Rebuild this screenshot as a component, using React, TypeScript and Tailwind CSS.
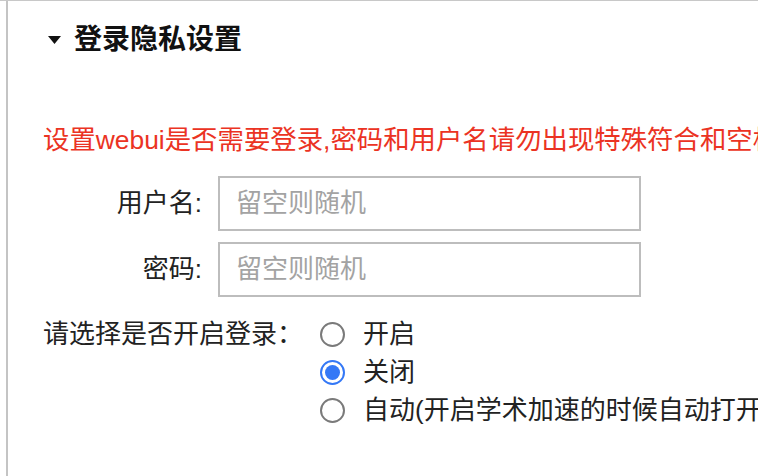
import React, { useState } from 'react';

const font = { fontFamily: '"Liberation Sans", "Noto Sans CJK SC", sans-serif' };

const options = [
  { value: 'on', label: '开启' },
  { value: 'off', label: '关闭' },
  { value: 'auto', label: '自动(开启学术加速的时候自动打开登录)' },
];

function Radio({ checked }: { checked: boolean }) {
  return checked ? (
    <span className="w-[25px] h-[25px] rounded-full border-2 border-[#3478f6] flex items-center justify-center shrink-0">
      <span className="w-[15px] h-[15px] rounded-full bg-[#3478f6]" />
    </span>
  ) : (
    <span className="w-[25px] h-[25px] rounded-full border-2 border-[#7a7a7a] shrink-0" />
  );
}

export default function App() {
  const [login, setLogin] = useState('off');
  const [user, setUser] = useState('');
  const [pwd, setPwd] = useState('');

  return (
    <div className="w-[758px] h-[476px] overflow-hidden bg-white border-t border-[#c8c8c8]" style={font}>
      <div className="ml-[6px] h-full border-l-2 border-[#c4c4c4] pl-[35px] pt-[21px] whitespace-nowrap">
        {/* 标题 */}
        <div className="flex items-center h-[36px] ml-[5px]">
          <svg width="13" height="8" viewBox="0 0 13 8" className="mr-[13px]">
            <path d="M0 0h13L6.5 8z" fill="#111" />
          </svg>
          <span className="text-[28px] font-bold text-[#111]">登录隐私设置</span>
        </div>

        <div className="mt-[64px] h-[36px] leading-[36px] text-[26.4px] text-[#eb3323]">
          设置webui是否需要登录,密码和用户名请勿出现特殊符合和空格
        </div>

        <div className="mt-[18px] flex flex-col gap-[11px]">
          <div className="flex items-center">
            <label className="w-[162px] shrink-0 text-right pr-[3px] text-[26px] text-[#222]">用户名:</label>
            <input
              value={user}
              onChange={(e) => setUser(e.target.value)}
              placeholder="留空则随机"
              className="ml-[13px] w-[423px] h-[55px] border-2 border-[#bdbdbd] px-[16px] text-[26px] text-[#222] placeholder:text-[#a3a3a3] outline-none"
            />
          </div>
          <div className="flex items-center">
            <label className="w-[162px] shrink-0 text-right pr-[3px] text-[26px] text-[#222]">密码:</label>
            <input
              value={pwd}
              onChange={(e) => setPwd(e.target.value)}
              placeholder="留空则随机"
              className="ml-[13px] w-[423px] h-[55px] border-2 border-[#bdbdbd] px-[16px] text-[26px] text-[#222] placeholder:text-[#a3a3a3] outline-none"
            />
          </div>
        </div>

        <div className="mt-[18px] flex items-start">
          <div className="w-[277px] shrink-0 h-[38px] leading-[38px] text-[26px] text-[#222]">请选择是否开启登录：</div>
          <div className="flex flex-col">
            {options.map((o) => (
              <label
                key={o.value}
                onClick={() => setLogin(o.value)}
                className="flex items-center h-[38px] gap-[18px] text-[26px] text-[#222] cursor-pointer"
              >
                <Radio checked={login === o.value} />
                <span>{o.label}</span>
              </label>
            ))}
          </div>
        </div>
      </div>
    </div>
  );
}
